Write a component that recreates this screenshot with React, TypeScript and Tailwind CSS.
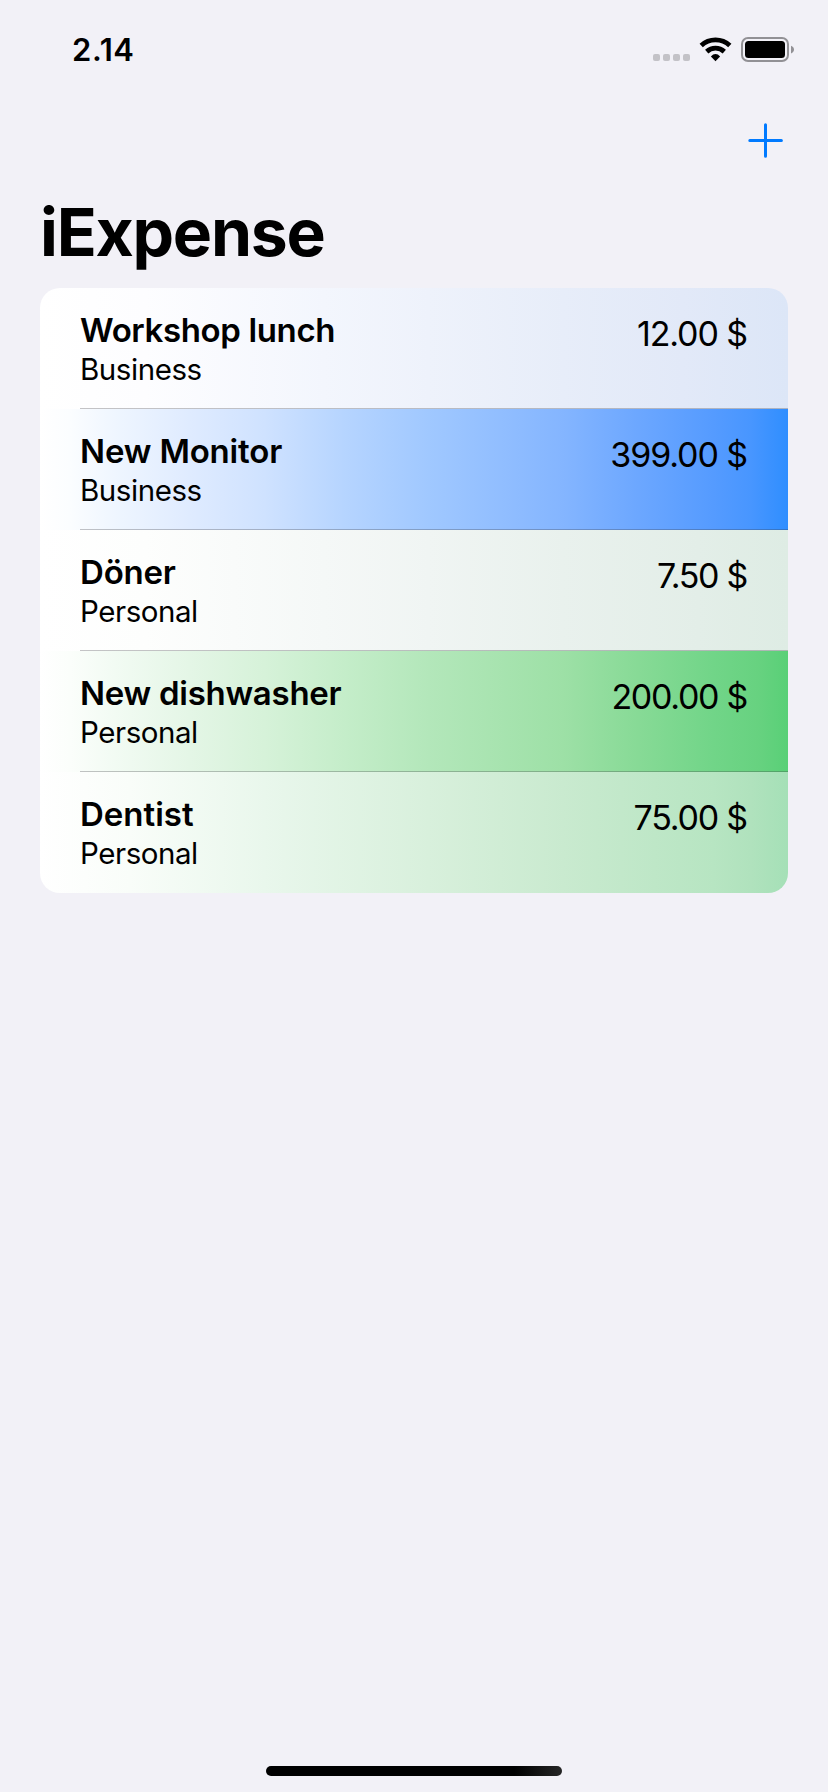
type Expense = {
  name: string;
  type: 'Business' | 'Personal';
  amount: string;
  background: string;
  nameSpacing: string;
  amountSpacing: string;
};

const expenses: Expense[] = [
  {
    name: 'Workshop lunch',
    type: 'Business',
    amount: '12.00 $',
    background: 'bg-[linear-gradient(90deg,#ffffff_0%,#fdfdff_14%,#f3f6fd_38%,#eef2fb_52%,#e7edf9_70%,#e2e9f8_86%,#dce6f7_100%)]',
    nameSpacing: 'tracking-[-0.37px]',
    amountSpacing: 'tracking-[-1.1px]',
  },
  {
    name: 'New Monitor',
    type: 'Business',
    amount: '399.00 $',
    background: 'bg-[linear-gradient(90deg,#ffffff_0%,#fbfdff_4%,#eff6ff_10%,#dfebff_20%,#cfe2ff_30%,#b5d4ff_41%,#a0c8ff_52%,#84b5ff_70%,#6ca7ff_80%,#559bff_90%,#4896ff_95%,#2f8eff_100%)]',
    nameSpacing: 'tracking-[-0.17px]',
    amountSpacing: 'tracking-[-1.1px]',
  },
  {
    name: 'Döner',
    type: 'Personal',
    amount: '7.50 $',
    background: 'bg-[linear-gradient(90deg,#ffffff_0%,#fdfefd_14%,#f5f8f7_38%,#f0f5f3_52%,#e9f1ed_70%,#e3eee8_88%,#deece4_100%)]',
    nameSpacing: 'tracking-[-0.2px]',
    amountSpacing: 'tracking-[-1.3px]',
  },
  {
    name: 'New dishwasher',
    type: 'Personal',
    amount: '200.00 $',
    background: 'bg-[linear-gradient(90deg,#ffffff_0%,#fbfefb_4%,#f2fbf3_10%,#e4f6e6_20%,#d6f2d9_30%,#c4edc9_41%,#b3e7ba_52%,#9de0a6_70%,#87da96_80%,#71d588_90%,#67d280_96%,#59d077_100%)]',
    nameSpacing: 'tracking-[-0.27px]',
    amountSpacing: 'tracking-[-1.3px]',
  },
  {
    name: 'Dentist',
    type: 'Personal',
    amount: '75.00 $',
    background: 'bg-[linear-gradient(90deg,#ffffff_0%,#f9fdf9_12%,#e9f7ec_30%,#d8f0dc_52%,#c9eacf_70%,#b7e5c2_90%,#b0e2bd_95%,#a5e0b7_100%)]',
    nameSpacing: 'tracking-[0px]',
    amountSpacing: 'tracking-[-1.2px]',
  },
];

function StatusBar() {
  return (
    <div className="flex h-[98px] items-start justify-between pr-[33px] pl-[72px]">
      <span className="mt-[30px] text-[31px] leading-10 font-semibold tracking-[0.6px]">2.14</span>
      <div className="mt-[36px] flex items-start">
        <div className="mt-[18px] flex gap-[3px]">
          <span className="size-[7px] rounded-[2px] bg-[#c3c2c7]" />
          <span className="size-[7px] rounded-[2px] bg-[#c3c2c7]" />
          <span className="size-[7px] rounded-[2px] bg-[#c3c2c7]" />
          <span className="size-[7px] rounded-[2px] bg-[#c3c2c7]" />
        </div>
        <svg className="ml-[9px]" width="33" height="26" viewBox="0 0 33 26" fill="none">
          <path d="M2.2 9.400a21 21 0 0 1 28.600 0" stroke="#000" strokeWidth="4.800" />
          <path d="M7.700 15.600a13.100 13.100 0 0 1 17.600 0" stroke="#000" strokeWidth="4.800" />
          <path d="M16.500 25.200 11.900 20.400Q14 18 16.500 18T21.100 20.400Z" fill="#000" />
        </svg>
        <svg className="ml-[9px]" width="54" height="27" viewBox="0 0 54 27" fill="none">
          <rect x="1" y="2" width="46" height="23" rx="6" stroke="#929195" strokeWidth="2" />
          <rect x="4" y="5" width="40" height="17" rx="3.5" fill="#000" />
          <path d="M50 9.800c4 1.400 4 6.200 0 7.600Z" fill="#929195" />
        </svg>
      </div>
    </div>
  );
}

function ExpenseRow({ expense, last }: { expense: Expense; last: boolean }) {
  return (
    <li className={`relative flex h-[121px] justify-between pt-[22px] pr-[41px] pl-[40px] ${expense.background}`}>
      <div>
        <h2 className={`text-[33px] leading-10 font-semibold ${expense.nameSpacing}`}>{expense.name}</h2>
        <p className="text-[29.5px] leading-[38px] tracking-[-0.45px]">{expense.type}</p>
      </div>
      <span className={`mt-1 text-[34px] leading-10 ${expense.amountSpacing}`}>{expense.amount}</span>
      {!last && <span className="absolute right-0 bottom-0 left-10 h-px bg-[#3c3c43]/30" />}
    </li>
  );
}

export default function App() {
  return (
    <div className="flex h-[1792px] w-[828px] flex-col bg-[#f2f1f7] font-['Inter','Liberation_Sans',sans-serif] text-black">
      <StatusBar />
      <div className="flex h-[94px] justify-end pt-[24px] pr-[44px]">
        <button aria-label="Add expense" className="size-[36px]">
          <svg width="36" height="36" viewBox="0 0 36 36" fill="none">
            <path d="M1.800 18.500H33.400M17.500 2.700V34.300" stroke="#007aff" strokeWidth="3" strokeLinecap="round" />
          </svg>
        </button>
      </div>
      <h1 className="mb-4 ml-10 text-[66px] leading-[80px] font-bold tracking-[-1.25px]">iExpense</h1>
      <ul className="mx-10 overflow-hidden rounded-[20px]">
        {expenses.map((expense, i) => (
          <ExpenseRow key={expense.name} expense={expense} last={i === expenses.length - 1} />
        ))}
      </ul>
      <div className="mx-auto mt-auto mb-4 h-[10px] w-[296px] rounded-full bg-[linear-gradient(90deg,#000_84%,#262626)]" />
    </div>
  );
}
